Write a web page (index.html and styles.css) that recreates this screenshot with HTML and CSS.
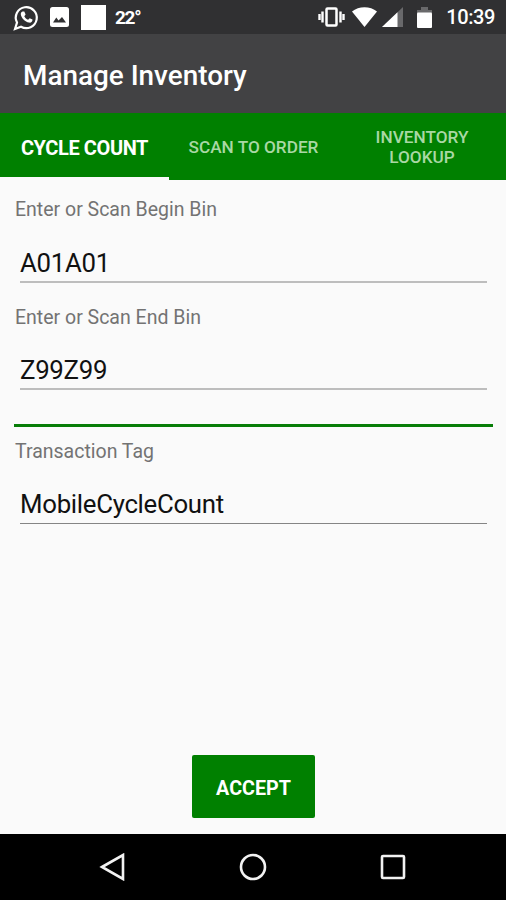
FILE: index.html
```
<!DOCTYPE html>
<html lang="en">
<head>
	<meta charset="utf-8">
	<title>Manage Inventory</title>
	<link rel="stylesheet" href="styles.css">
</head>
<body>
	<div class="status-bar">
		<svg class="icon-chat" width="26" height="28" viewBox="0 0 26 28">
			<path d="M2 26 L4 19.500 A10.500 10.500 0 1 1 8 23.700 Z" fill="none" stroke="#fff" stroke-width="2.200"/>
			<path d="M9.500 8.500 L11.300 8.500 L12.600 11.600 L11.300 13.200 C12.200 15 13.500 16 15.100 16.800 L16.700 15.200 L19.500 16.600 C19.700 19 17.800 20 16 19.600 C12 18.900 8.800 15.500 7.900 12 C7.500 10.300 8.200 9 9.500 8.500 Z" fill="#fff"/>
		</svg>
		<svg class="icon-image" width="19" height="20" viewBox="0 0 19 20">
			<rect width="19" height="20" rx="2.500" fill="#fff"/>
			<path d="M3 15.500 L6.300 10.500 L8.500 13.500 L12 10 L16 15.500 Z" fill="#303032"/>
		</svg>
		<div class="icon-square"></div>
		<span class="temperature">22°</span>
		<svg class="icon-vibrate" width="27" height="20" viewBox="0 0 27 20">
			<path d="M1.500 7 V13 M4.500 4.500 V15.500 M22.500 4.500 V15.500 M25.500 7 V13" stroke="#fff" stroke-width="2.400"/>
			<rect x="8.500" y="1.500" width="10" height="17" rx="1" fill="none" stroke="#fff" stroke-width="2.500"/>
		</svg>
		<svg class="icon-wifi" width="25" height="20" viewBox="0 0 26 20" preserveAspectRatio="none">
			<path d="M0 4.500 C7 -1.200 19 -1.200 26 4.500 L13 20 Z" fill="#fff"/>
		</svg>
		<svg class="icon-signal" width="21" height="20" viewBox="0 0 21 20">
			<path d="M0 20 L21 0 V20 Z" fill="#69696b"/>
			<path d="M0 20 L15.500 5.200 V20 Z" fill="#fff"/>
		</svg>
		<svg class="icon-battery" width="15" height="21" viewBox="0 0 15 21">
			<path d="M0 6 V3 H4 V0 H11 V3 H15 V6 Z" fill="#69696b"/>
			<rect y="5.500" width="15" height="15.500" rx="1" fill="#fff"/>
		</svg>
		<span class="clock">10:39</span>
	</div>

	<header class="app-bar">
		<h1>Manage Inventory</h1>
	</header>

	<nav class="tabs">
		<a class="tab active">CYCLE COUNT</a>
		<a class="tab">SCAN TO ORDER</a>
		<a class="tab">INVENTORY<br>LOOKUP</a>
	</nav>

	<main class="content">
		<div class="field">
			<label for="beginBin">Enter or Scan Begin Bin</label>
			<input type="text" id="beginBin" value="A01A01">
		</div>
		<div class="field end">
			<label for="endBin">Enter or Scan End Bin</label>
			<input type="text" id="endBin" value="Z99Z99">
		</div>
		<div class="divider"></div>
		<div class="field tag">
			<label for="tag">Transaction Tag</label>
			<input type="text" id="tag" value="MobileCycleCount">
		</div>
		<button type="button" class="accept">ACCEPT</button>
	</main>

	<footer class="nav-bar">
		<svg width="28" height="28" viewBox="0 0 28 28">
			<path d="M3 14 L24 2 V26 Z"/>
		</svg>
		<svg width="28" height="28" viewBox="0 0 28 28">
			<circle cx="14" cy="14" r="12"/>
		</svg>
		<svg width="28" height="28" viewBox="0 0 28 28">
			<rect x="3" y="3" width="22" height="22" rx="1"/>
		</svg>
	</footer>
</body>
</html>
```
FILE: styles.css
```
* {
	box-sizing: border-box;
}
body {
	margin: 0;
	height: 900px;
	display: flex;
	flex-direction: column;
	background-color: #fafafa;
	font-family: Roboto, sans-serif;
}

.status-bar {
	height: 34px;
	flex: none;
	display: flex;
	align-items: center;
	padding: 0 11px 0 13px;
	background-color: #303032;
	color: #fff;
}
.icon-chat {
	margin-right: 11px;
}
.icon-image {
	margin-right: 12px;
}
.icon-square {
	width: 25px;
	height: 25px;
	background-color: #fff;
}
.temperature {
	margin-left: 9px;
	margin-right: auto;
	font-size: 19px;
	font-weight: bold;
	letter-spacing: -1.3px;
}
.icon-wifi {
	margin-left: 7px;
}
.icon-signal {
	margin-left: 5px;
}
.icon-battery {
	margin-left: 14px;
}
.clock {
	margin-left: 14px;
	font-size: 20px;
	font-weight: 500;
	line-height: 37px;
	letter-spacing: -0.4px;
}

.app-bar {
	height: 79px;
	flex: none;
	display: flex;
	align-items: center;
	padding: 4px 23px 0;
	background-color: #424244;
}
h1 {
	margin: 0;
	color: #fff;
	font-size: 27.9px;
	font-weight: 500;
}

.tabs {
	height: 67px;
	flex: none;
	display: grid;
	grid-template-columns: 169px 169px 168px;
	background-color: #008000;
}
.tab {
	display: flex;
	align-items: center;
	justify-content: center;
	color: #a9d8a4;
	font-size: 17.2px;
	font-weight: 500;
	line-height: 20px;
	text-align: center;
}
.tab.active {
	padding-top: 5px;
	border-bottom: 3px solid #fafafa;
	color: #fff;
	font-size: 20px;
	font-weight: bold;
	letter-spacing: -0.4px;
}

.content {
	flex: 1;
	display: flex;
	flex-direction: column;
	padding: 17px 13px 0 14px;
}
.field {
	height: 107px;
	flex: none;
}
label {
	display: block;
	padding-left: 1px;
	color: #737373;
	font-size: 19.5px;
	line-height: 25px;
}
input {
	display: block;
	width: 467px;
	height: 41px;
	margin: 20px 0 0 6px;
	padding: 2px 0 0;
	border: 0;
	border-bottom: 2px solid #bdbdbd;
	background: none;
	color: #111;
	font-family: inherit;
	font-size: 25.8px;
	letter-spacing: -0.3px;
}
.end label,
.tag label {
	padding-top: 1px;
}
.end input,
.tag input {
	margin-top: 19px;
}
.divider {
	height: 3px;
	flex: none;
	margin: 13px 0 11px;
	background-color: #077d07;
}
.tag input {
	border-bottom: 1px solid #858585;
}
.accept {
	align-self: center;
	width: 123px;
	height: 63px;
	margin: auto 0 16px;
	padding: 3px 0 0;
	border: 0;
	border-radius: 2px;
	background-color: #008000;
	color: #fff;
	font-family: inherit;
	font-size: 19.7px;
	font-weight: bold;
}

.nav-bar {
	height: 66px;
	flex: none;
	display: flex;
	justify-content: center;
	align-items: center;
	gap: 112px;
	background-color: #000;
}
.nav-bar svg {
	fill: none;
	stroke: #f2f2f2;
	stroke-width: 2.6;
}
```
